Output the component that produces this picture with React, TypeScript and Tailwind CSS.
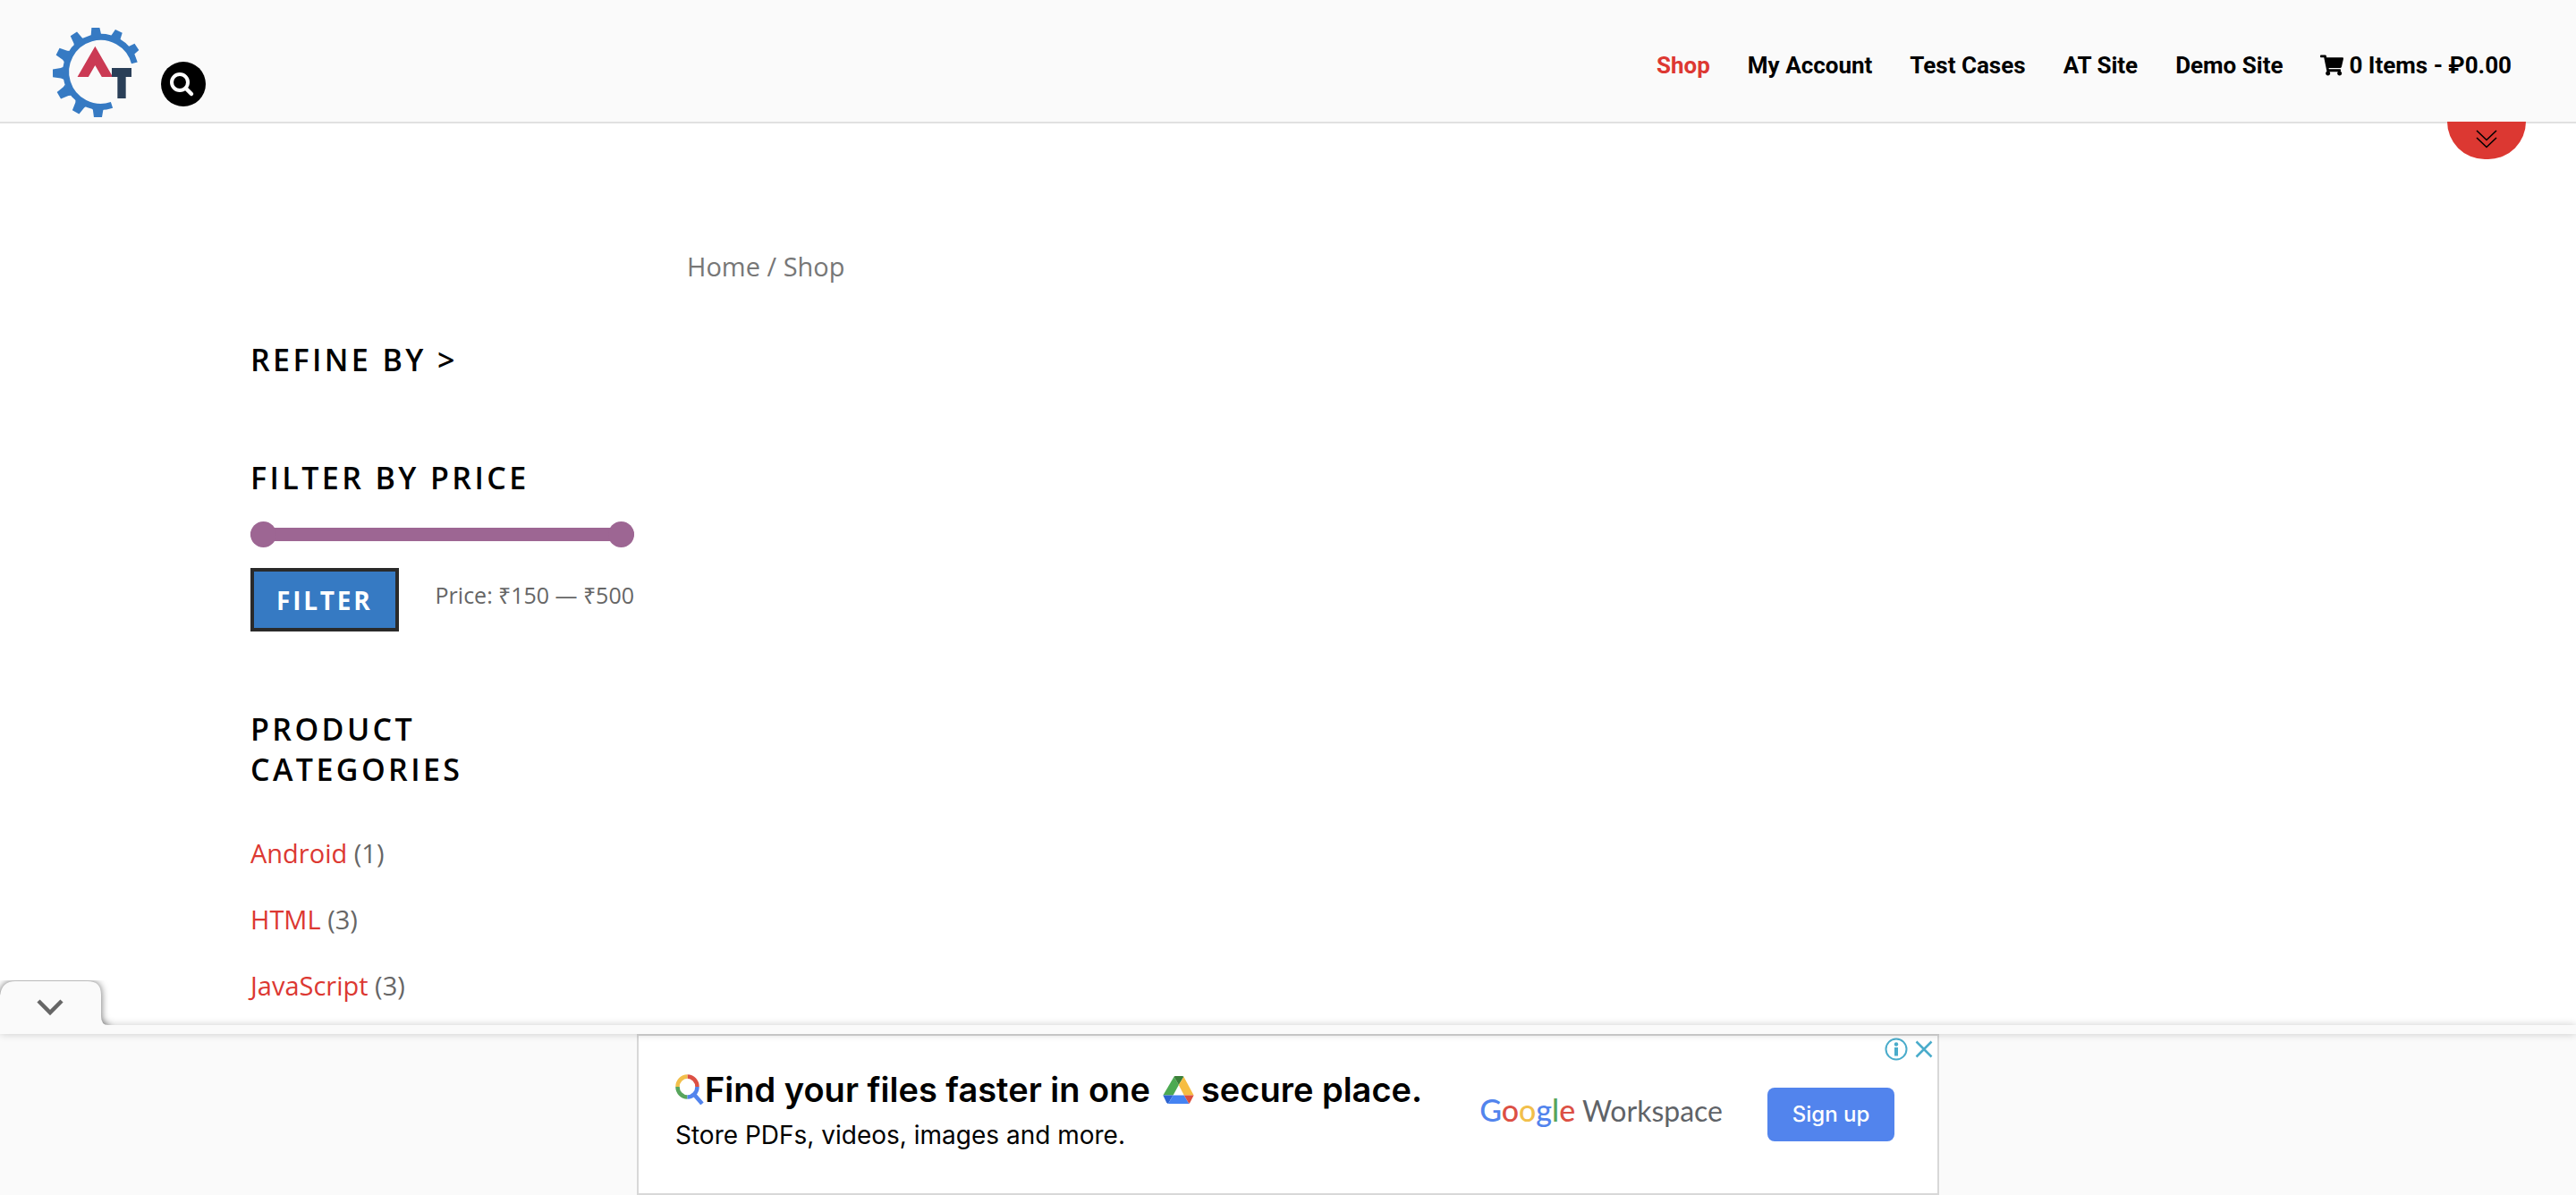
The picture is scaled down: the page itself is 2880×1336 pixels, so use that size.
import { useState } from 'react';
import { FaShoppingCart } from 'react-icons/fa';

const navLinks = ['Shop', 'My Account', 'Test Cases', 'AT Site', 'Demo Site'];

const categories = [
  { name: 'Android', count: 1 },
  { name: 'HTML', count: 3 },
  { name: 'JavaScript', count: 3 },
];

const gearTeeth = [-94, -64, -34, -123, -153, 179, 150, 120, 91];

const thumb =
  'pointer-events-none absolute inset-0 m-0 h-full w-full appearance-none bg-transparent [&::-webkit-slider-thumb]:pointer-events-auto [&::-webkit-slider-thumb]:size-[29px] [&::-webkit-slider-thumb]:appearance-none [&::-webkit-slider-thumb]:rounded-full [&::-webkit-slider-thumb]:bg-[#9d6693]';

const heading = 'text-[34px] leading-[45px] font-semibold tracking-widest text-black uppercase';

function GearLogo() {
  return (
    <svg viewBox="177 93 291 300" className="h-[100px] w-[97px]" aria-hidden="true">
      <defs>
        <clipPath id="peak-base">
          <rect x="255" y="140" width="130" height="118" />
        </clipPath>
      </defs>
      <path d="M375 352A117 117 0 1 1 451 211" fill="none" stroke="#367ac3" strokeWidth="21" />
      {gearTeeth.map((a) => (
        <polygon key={a} points="118,-21 127,-17 154,-13 154,13 127,17 118,21" transform={`translate(331 243) rotate(${a})`} fill="#367ac3" />
      ))}
      <polyline points="266,279 319,187 372,279" clipPath="url(#peak-base)" fill="none" stroke="#cb3a54" strokeWidth="32" strokeMiterlimit="10" />
      <line x1="375" y1="243" x2="441" y2="243" stroke="#2a3f58" strokeWidth="30" />
      <line x1="408" y1="243" x2="408" y2="330" stroke="#2a3f58" strokeWidth="28" />
    </svg>
  );
}

function PriceFilter() {
  const [low, setLow] = useState(150);
  const [high, setHigh] = useState(500);
  return (
    <form onSubmit={(e) => e.preventDefault()}>
      <div className="relative mt-[26px] flex h-[29px] items-center">
        <div className="h-[15px] w-full rounded-full bg-[#9d6693]" />
        <input type="range" aria-label="Minimum price" min={150} max={500} value={low} onChange={(e) => setLow(Math.min(Number(e.target.value), high))} className={thumb} />
        <input type="range" aria-label="Maximum price" min={150} max={500} value={high} onChange={(e) => setHigh(Math.max(Number(e.target.value), low))} className={thumb} />
      </div>
      <div className="mt-[23px] flex items-start justify-between">
        <button type="submit" className="h-[71px] border-4 border-[#2a2a2a] bg-[#367ac3] px-[25px] text-[28px] leading-[40px] font-bold tracking-widest text-white uppercase">
          Filter
        </button>
        <p className="mt-[6px] text-[25px] leading-[48px] text-[#666]">
          Price: ₹{low} — ₹{high}
        </p>
      </div>
    </form>
  );
}

function MagnifierMark() {
  return (
    <svg viewBox="0 0 32 34" className="h-[34px] w-[32px]" fill="none" strokeWidth="4.5" aria-hidden="true">
      <path d="M13.5 2.5A11 11.5 0 0 1 24.5 14" stroke="#dc5044" />
      <path d="M2.5 14A11 11.5 0 0 1 13.5 2.5" stroke="#f2bf4b" />
      <path d="M13.5 25.5A11 11.5 0 0 1 2.5 14" stroke="#57a55c" />
      <path d="M24.5 14A11 11.5 0 0 1 13.5 25.5M20.5 22L30 33" stroke="#5284ed" />
    </svg>
  );
}

function DriveMark() {
  return (
    <svg viewBox="0 0 104 94" className="h-[31px] w-[35px]" aria-hidden="true">
      <path d="M37 2L0 65H34L53 30Z" fill="#4caa52" />
      <path d="M37 2Q38 0 41 0H65Q68 0 70 2L53 30Z" fill="#3b8039" />
      <path d="M70 2L104 65H71L53 30Z" fill="#f6bd42" />
      <path d="M0 65H34L17 94Q13 93 11 89Z" fill="#2c63d0" />
      <path d="M34 65H71L88 94H17Z" fill="#4583f2" />
      <path d="M71 65H104L92 89Q90 93 88 94Z" fill="#dc5040" />
    </svg>
  );
}

function AdBanner() {
  return (
    <section aria-label="Advertisement" className="relative mx-auto flex h-[180px] w-full max-w-[1456px] border-2 border-[#d8d8d8] bg-white font-['Inter',sans-serif]">
      <div className="pt-[35px] pl-[41px]">
        <h2 className="flex h-[50px] items-center text-[38px] leading-[50px] font-semibold whitespace-nowrap text-black">
          <MagnifierMark />
          <span className="ml-px">Find your files faster in one</span>
          <span className="mr-2 ml-[14px]">
            <DriveMark />
          </span>
          <span>secure place.</span>
        </h2>
        <p className="mt-[6px] text-[28px] leading-[40px] whitespace-nowrap text-black">Store PDFs, videos, images and more.</p>
      </div>
      <div className="ml-auto flex items-center pr-[48px]">
        <p className="mr-[50px] mb-[10px] font-['Lato',sans-serif] text-[32px] leading-[40px] whitespace-nowrap text-[#5f6368]">
          <span className="text-[34px] font-medium">
            <span className="text-[#5284ed]">G</span>
            <span className="text-[#dc5044]">o</span>
            <span className="text-[#f2bf4b]">o</span>
            <span className="text-[#5284ed]">g</span>
            <span className="text-[#57a55c]">l</span>
            <span className="text-[#dc5044]">e</span>
          </span>{' '}
          Workspace
        </p>
        <button type="button" className="h-[60px] w-[142px] rounded-lg bg-[#5284ed] text-[24px] leading-[32px] font-medium text-white">
          Sign up
        </button>
      </div>
      <div className="absolute top-[2px] right-[5px] flex items-center gap-[8px] text-[#4aaccb]">
        <button type="button" aria-label="Ad information">
          <svg viewBox="0 0 26 26" className="size-[26px]" fill="none" stroke="currentColor" aria-hidden="true">
            <circle cx="13" cy="13" r="11.5" strokeWidth="2" />
            <circle cx="13" cy="7.5" r="2.2" fill="currentColor" stroke="none" />
            <path d="M13 11V20.5" strokeWidth="4" />
          </svg>
        </button>
        <button type="button" aria-label="Close ad">
          <svg viewBox="0 0 20 20" className="size-[20px]" fill="none" stroke="currentColor" strokeWidth="2.5" aria-hidden="true">
            <path d="M1.5 1.5L18.5 18.5M18.5 1.5L1.5 18.5" />
          </svg>
        </button>
      </div>
    </section>
  );
}

function AdDock() {
  return (
    <aside className="fixed inset-x-0 bottom-0 bg-[#fafafa]">
      <div className="relative z-10 h-[10px] bg-[#fafafa] shadow-[0_0_10px_rgba(0,0,0,0.2)]">
        <button type="button" aria-label="Collapse ad" className="absolute bottom-0 left-0">
          <svg viewBox="0 0 134 60" className="h-[60px] w-[134px]" aria-hidden="true">
            <path
              d="M-20 80V17H0Q2 1 17 1H98Q113 1 113 16V40Q113 50 121 50V80Z"
              fill="#fafafa"
              className="drop-shadow-[0_0_4px_rgba(0,0,0,0.6)]"
            />
            <rect x="113" y="50" width="21" height="10" fill="#fafafa" />
            <path d="M43 23L56 36L69 23" fill="none" stroke="#666" strokeWidth="4.5" />
          </svg>
        </button>
      </div>
      <AdBanner />
    </aside>
  );
}

export default function App() {
  return (
    <div className="min-h-screen bg-white font-['Open_Sans',sans-serif] text-[#666]">
      <header className="relative flex h-[138px] items-start justify-between border-b-2 border-[#e1e1e1] bg-[#fafafa] pr-[72px] pl-[59px]">
        <div className="flex">
          <a href="#home" aria-label="Automation Testing home" className="mt-[31px]">
            <GearLogo />
          </a>
          <button type="button" aria-label="Search" className="mt-[69px] ml-6 size-[50px] rounded-full bg-black">
            <svg viewBox="0 0 50 50" className="size-[50px]" fill="none" stroke="white" aria-hidden="true">
              <circle cx="21" cy="23" r="9" strokeWidth="4" />
              <path d="M28 30L34 36" strokeWidth="4.5" strokeLinecap="round" />
            </svg>
          </button>
        </div>
        <nav className="mt-[53px] flex items-center gap-[42px] font-['Roboto',sans-serif] text-[26px] leading-[40px] font-bold text-black">
          {navLinks.map((label) => (
            <a key={label} href={`#${label}`} className={label === 'Shop' ? 'text-[#dd3832]' : ''}>
              {label}
            </a>
          ))}
          <a href="#cart" className="flex items-center gap-[6px]">
            <FaShoppingCart className="size-[26px]" />
            0 Items - ₽0.00
          </a>
        </nav>
        <button type="button" aria-label="Show more" className="absolute top-[136px] right-[56px] flex h-[42px] w-[88px] justify-center rounded-b-[44px] bg-[#dc3832]">
          <svg viewBox="0 0 24 22" className="mt-[9px] h-[22px] w-[24px]" fill="none" stroke="black" strokeWidth="1.6" aria-hidden="true">
            <path d="M1 1L12 11.5L23 1M1 9L12 19.5L23 9" />
          </svg>
        </button>
      </header>

      <main className="mx-auto flex w-full max-w-[2320px] gap-[59px]">
        <aside className="flex w-[429px] shrink-0 flex-col gap-[87px] pt-[242px]">
          <h2 className={heading}>Refine by &gt;</h2>
          <section>
            <h2 className={heading}>Filter by price</h2>
            <PriceFilter />
          </section>
          <section>
            <h2 className={heading}>
              Product
              <br />
              Categories
            </h2>
            <ul className="mt-[46px] flex flex-col gap-6 text-[29px] leading-[50px]">
              {categories.map((c) => (
                <li key={c.name}>
                  <a href={`#${c.name}`} className="text-[#dc3832]">
                    {c.name}
                  </a>{' '}
                  ({c.count})
                </li>
              ))}
            </ul>
          </section>
        </aside>
        <nav aria-label="Breadcrumb" className="pt-[140px] text-[29px] leading-[40px] text-[#777]">
          <a href="#home">Home</a> / Shop
        </nav>
      </main>

      <AdDock />
    </div>
  );
}
